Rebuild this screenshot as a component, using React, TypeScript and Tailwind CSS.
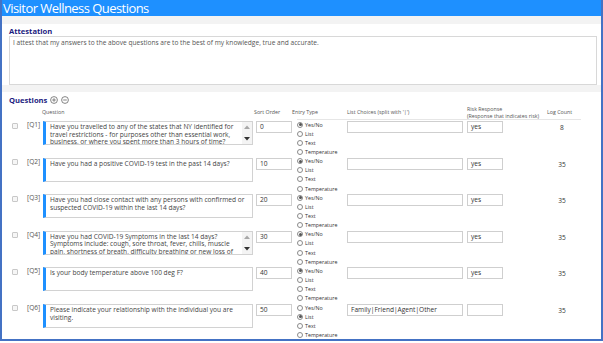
import React from "react";

type Q = {
  id: string;
  lines: string[];
  scroll?: boolean;
  sort: string;
  type: number;
  list: string;
  risk: string;
  count: string;
};

const questions: Q[] = [
  {
    id: "Q1",
    lines: [
      "Have you travelled to any of the states that NY identified for",
      "travel restrictions - for purposes other than essential work,",
      "business, or where you spent more than 3 hours of time?",
    ],
    scroll: true,
    sort: "0",
    type: 0,
    list: "",
    risk: "yes",
    count: "8",
  },
  {
    id: "Q2",
    lines: ["Have you had a positive COVID-19 test in the past 14 days?"],
    sort: "10",
    type: 0,
    list: "",
    risk: "yes",
    count: "35",
  },
  {
    id: "Q3",
    lines: [
      "Have you had close contact with any persons with confirmed or",
      "suspected COVID-19 within the last 14 days?",
    ],
    sort: "20",
    type: 0,
    list: "",
    risk: "yes",
    count: "35",
  },
  {
    id: "Q4",
    lines: [
      "Have you had COVID-19 Symptoms in the last 14 days?",
      "Symptoms include: cough, sore throat, fever, chills, muscle",
      "pain, shortness of breath, difficulty breathing or new loss of",
    ],
    scroll: true,
    sort: "30",
    type: 0,
    list: "",
    risk: "yes",
    count: "35",
  },
  {
    id: "Q5",
    lines: ["Is your body temperature above 100 deg F?"],
    sort: "40",
    type: 0,
    list: "",
    risk: "yes",
    count: "35",
  },
  {
    id: "Q6",
    lines: ["Please indicate your relationship with the individual you are", "visiting."],
    sort: "50",
    type: 1,
    list: "Family|Friend|Agent|Other",
    risk: "",
    count: "35",
  },
];

const entryTypes = ["Yes/No", "List", "Text", "Temperature"];

function CircleIcon({ minus }: { minus?: boolean }) {
  return (
    <svg width="8" height="8" viewBox="0 0 8 8">
      <circle cx="4" cy="4" r="3.4" fill="white" stroke="#666" strokeWidth="0.8" />
      <line x1="2.2" y1="4" x2="5.8" y2="4" stroke="#666" strokeWidth="0.8" />
      {!minus && <line x1="4" y1="2.2" x2="4" y2="5.8" stroke="#666" strokeWidth="0.8" />}
    </svg>
  );
}

function Radio({ checked, label }: { checked: boolean; label: string }) {
  return (
    <div className="flex h-[9.15px] items-center gap-[2px]">
      <div className="flex h-[6px] w-[6px] items-center justify-center rounded-full border-[0.8px] border-[#8a8a8a] bg-white">
        {checked && <div className="h-[3px] w-[3px] rounded-full bg-[#555]" />}
      </div>
      <span className="text-[5.3px] leading-[6px] text-[#333]">{label}</span>
    </div>
  );
}

function Row({ q }: { q: Q }) {
  return (
    <div className="flex h-[36.6px]">
      <div className="w-[25px] pl-[10px] pt-[2.5px]">
        <div className="h-[6px] w-[6px] rounded-[1px] border-[0.8px] border-[#c8c8c8] bg-[#f6f6f6]" />
      </div>
      <div className="w-[16px] pt-[1px] text-[6.6px] leading-[8px] text-[#555]">[{q.id}]</div>
      <div className="mt-[1px] flex h-[24px] w-[210px] overflow-hidden border border-l-[3px] border-[#d2d2d2] border-l-[#1e90ff] bg-white">
        <div className="flex-1 pl-[4px] pt-[1px] text-[6.6px] leading-[7.7px] text-[#444]">
          {q.lines.map((l, i) => (
            <div key={i} className="whitespace-nowrap">
              {l}
            </div>
          ))}
        </div>
        {q.scroll && (
          <div className="flex w-[10px] flex-col items-center justify-between bg-[#f4f4f4] py-[3px]">
            <svg width="6" height="4" viewBox="0 0 6 4">
              <path d="M0 4 L3 0.5 L6 4 Z" fill="#a8a8a8" />
            </svg>
            <svg width="6" height="4" viewBox="0 0 6 4">
              <path d="M0 0 L3 3.5 L6 0 Z" fill="#333" />
            </svg>
          </div>
        )}
      </div>
      <div className="ml-[3px] mt-[1px] h-[12px] w-[36px] border border-[#cfcfcf] bg-white pl-[3px] text-[6.6px] leading-[10px] text-[#333]">
        {q.sort}
      </div>
      <div className="ml-[5px] w-[50px]">
        {entryTypes.map((t, i) => (
          <Radio key={t} checked={i === q.type} label={t} />
        ))}
      </div>
      <div className="mt-[1px] h-[12px] w-[116px] border border-[#cfcfcf] bg-white pl-[3px] text-[6.6px] leading-[10px] text-[#333]">
        {q.list}
      </div>
      <div className="ml-[4px] mt-[1px] h-[12px] w-[36px] border border-[#cfcfcf] bg-white pl-[3px] text-[6.6px] leading-[10px] text-[#333]">
        {q.risk}
      </div>
      <div className="ml-[41px] w-[36px] pt-[4px] text-center text-[6.6px] leading-[8px] text-[#333]">
        {q.count}
      </div>
    </div>
  );
}

export default function App() {
  return (
    <div className="h-[343px] w-[603px] bg-white" style={{ fontFamily: '"Open Sans", "Noto Sans", sans-serif' }}>
      <div className="flex h-[341px] w-[603px] flex-col overflow-hidden border-x-2 border-b-2 border-[#4472c4] bg-[#f3f3f3]">
        <div className="h-[16px] bg-[#1e90ff] pl-[1px] text-[13px] leading-[16px] tracking-[-0.55px] text-white">
          Visitor Wellness Questions
        </div>

        <div className="mt-[8px] h-[62px] bg-white pl-[7px] pr-[4px] pt-[2px]">
          <div className="text-[7.6px] font-bold leading-[10px] text-[#1c1c80]">Attestation</div>
          <div className="h-[49px] border border-[#d8d8d8] bg-white pl-[3px] pt-[1px] text-[6.6px] leading-[9px] text-[#555]">
            I attest that my answers to the above questions are to the best of my knowledge, true and accurate.
          </div>
        </div>

        <div className="mt-[7px] flex-1 bg-white">
          <div className="flex h-[14px] items-center pl-[7px] pt-[1px]">
            <span className="text-[7.6px] font-bold leading-[10px] text-[#1c1c80]">Questions</span>
            <div className="ml-[3px] flex gap-[3px]">
              <CircleIcon />
              <CircleIcon minus />
            </div>
          </div>

          <div className="flex h-[13px] items-center text-[5.3px] leading-[6.7px] text-[#555]">
            <div className="w-[40px]" />
            <div className="w-[212px]">Question</div>
            <div className="w-[38px]">Sort Order</div>
            <div className="w-[55px]">Entry Type</div>
            <div className="w-[120px]">List Choices (split with '|')</div>
            <div className="w-[80px]">
              <div>Risk Response</div>
              <div>(Response that indicates risk)</div>
            </div>
            <div>Log Count</div>
          </div>

          <div className="ml-[295px] h-[1px] w-[284px] bg-[#e6e6e6]" />

          {questions.map((q) => (
            <Row key={q.id} q={q} />
          ))}
        </div>
      </div>
    </div>
  );
}
